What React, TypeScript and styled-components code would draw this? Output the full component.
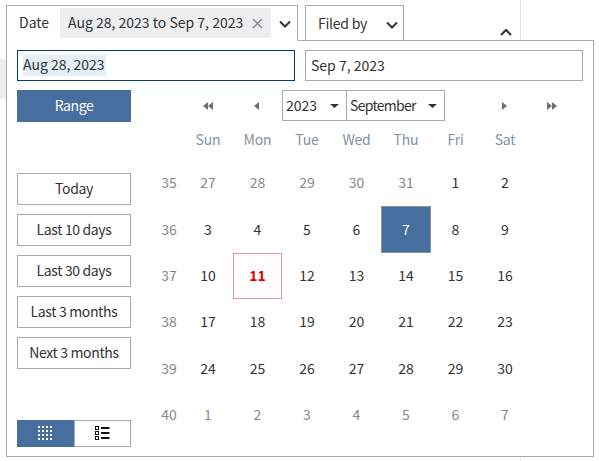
import React from "react";
import styled, { createGlobalStyle } from "styled-components";

const Global = createGlobalStyle`
  html, body { margin: 0; padding: 0; background: #fff; }
  body { font-family: "Noto Sans CJK JP", "Noto Sans", sans-serif; font-size: 14px; color: #333; }
  * { box-sizing: border-box; }
`;

const Page = styled.div`
  position: relative;
  width: 599px;
  height: 461px;
  overflow: hidden;
  padding: 5px 0 0 6px;
`;
const BackBlock = styled.div`
  position: absolute;
  left: 0;
  top: 59px;
  width: 6px;
  height: 40px;
  background: #eceef0;
`;
const BackLine = styled.div`
  position: absolute;
  left: 520px;
  top: 0;
  width: 1px;
  height: 461px;
  background: #e4e4e4;
`;
const Toolbar = styled.div`
  position: relative;
  z-index: 2;
  display: flex;
  height: 36px;
  width: 588px;
`;
const DateGroup = styled.div`
  display: flex;
  align-items: flex-start;
  width: 292px;
  height: 36px;
  border: 1px solid #aaa;
  border-bottom-color: #fff;
  background: #fff;
  padding: 2px 0 0 12px;
`;
const Label = styled.span`
  width: 41px;
  line-height: 28px;
`;
const Chip = styled.div`
  display: flex;
  align-items: center;
  width: 211px;
  height: 30px;
  background: #eceef0;
  padding-left: 8px;
`;
const ChipText = styled.span`
  width: 184px;
  white-space: nowrap;
  padding-bottom: 2px;
`;
const ChevronSlot = styled.span`
  display: flex;
  align-items: center;
  height: 32px;
  width: 20px;
  justify-content: flex-end;
`;
const FiledBy = styled.div`
  display: flex;
  align-items: center;
  width: 99px;
  height: 36px;
  margin-left: 7px;
  border: 1px solid #aaa;
  background: #fff;
  padding: 0 0 0 12px;
`;
const FiledLabel = styled.span`
  display: flex;
  width: 68px;
  letter-spacing: -0.25px;
`;
const FiledChevron = styled.span`
  display: flex;
  margin-top: 3px;
`;
const Collapse = styled.span`
  position: absolute;
  left: 494px;
  top: 23px;
  display: flex;
`;
const Panel = styled.div`
  position: relative;
  z-index: 1;
  width: 588px;
  height: 417px;
  margin-top: -1px;
  background: #fff;
  border: 1px solid #aaa;
  padding: 9px 10px;
  display: flex;
  flex-direction: column;
`;
const InputRow = styled.div`
  display: flex;
  gap: 10px;
  height: 31px;
`;
const DateInput = styled.div<{ $focus?: boolean }>`
  display: flex;
  align-items: center;
  width: 278px;
  height: 31px;
  padding: 0 5px;
  border: 1px solid ${(p) => (p.$focus ? "#003f72" : "#aaa")};
`;
const InputText = styled.span`
  padding-bottom: 2px;
`;
const Selected = styled.span`
  display: inline-block;
  background: #e3eef7;
  line-height: 19px;
  padding: 0 1px 2px 0;
`;
const Body = styled.div`
  display: flex;
  flex: 1;
  margin-top: 9px;
`;
const Side = styled.div`
  display: flex;
  flex-direction: column;
  width: 114px;
`;
const RangeButton = styled.div`
  display: flex;
  align-items: center;
  justify-content: center;
  height: 32px;
  padding-bottom: 2px;
  background: #466fa0;
  color: #fff;
  letter-spacing: -0.4px;
`;
const Presets = styled.div`
  display: flex;
  flex-direction: column;
  gap: 9px;
  margin-top: 51px;
`;
const Preset = styled.div`
  display: flex;
  align-items: center;
  justify-content: center;
  height: 32px;
  padding-bottom: 2px;
  border: 1px solid #aaa;
  letter-spacing: -0.35px;
`;
const Toggle = styled.div`
  display: flex;
  height: 27px;
  margin-top: auto;
`;
const ToggleItem = styled.div<{ $on?: boolean }>`
  display: flex;
  flex: 1;
  align-items: center;
  justify-content: center;
  background: ${(p) => (p.$on ? "#466fa0" : "#fff")};
  border: 1px solid ${(p) => (p.$on ? "#466fa0" : "#aaa")};
  color: ${(p) => (p.$on ? "#fff" : "#111")};
`;
const Main = styled.div`
  display: flex;
  flex-direction: column;
  margin-left: 19px;
`;
const Nav = styled.div`
  position: relative;
  display: flex;
  align-items: center;
  height: 31px;
  padding-left: 132px;
`;
const NavIcon = styled.span<{ $x: number }>`
  position: absolute;
  left: ${(p) => p.$x}px;
  top: 12px;
  display: flex;
  color: #707070;
`;
const Select = styled.div<{ $w: number }>`
  display: flex;
  align-items: center;
  justify-content: space-between;
  width: ${(p) => p.$w}px;
  height: 31px;
  margin-right: -1px;
  padding: 0 7px 0 3px;
  border: 1px solid #aaa;
`;
const SelectText = styled.span<{ $tight?: boolean }>`
  padding-bottom: 2px;
  letter-spacing: ${(p) => (p.$tight ? "-0.7px" : "0")};
`;
const Grid = styled.div`
  display: grid;
  grid-template-columns: 33.25px repeat(7, 49.5px);
  grid-auto-rows: 46.4px;
  margin-top: 9px;
`;
const HeadRow = styled.div`
  display: grid;
  grid-template-columns: 33.25px repeat(7, 49.5px);
  margin-top: 8px;
  height: 22px;
`;
const Head = styled.div`
  display: flex;
  align-items: center;
  justify-content: center;
  height: 22px;
  padding-bottom: 2px;
  color: #8492a0;
  letter-spacing: -0.2px;
`;
const Week = styled.div`
  display: flex;
  align-items: center;
  justify-content: center;
  color: #888;
  padding: 0 0 2px 5px;
`;
const Day = styled.div<{ $kind?: "other" | "selected" | "today" }>`
  display: flex;
  align-items: center;
  justify-content: center;
  padding-bottom: 2px;
  color: ${(p) =>
    p.$kind === "other" ? "#888" : p.$kind === "selected" ? "#fff" : p.$kind === "today" ? "#e00000" : "#333"};
  font-weight: ${(p) => (p.$kind === "today" ? 700 : 400)};
  background: ${(p) => (p.$kind === "selected" ? "#466fa0" : "transparent")};
  border: 1px solid
    ${(p) => (p.$kind === "selected" ? "#8a95a3" : p.$kind === "today" ? "#e39aa0" : "transparent")};
`;

const Chevron = ({ up }: { up?: boolean }) => (
  <svg width="12" height="8" viewBox="0 0 12 8">
    <path d={up ? "M1 7l5-5 5 5" : "M1 1.5l5 5 5-5"} fill="none" stroke="#333" strokeWidth="2" />
  </svg>
);
const Close = () => (
  <svg width="11" height="11" viewBox="0 0 11 11">
    <path d="M1 1l9 9M10 1l-9 9" stroke="#888" strokeWidth="1.4" />
  </svg>
);
const Caret = () => (
  <svg width="9" height="4" viewBox="0 0 9 4">
    <path d="M0 0h9L4.5 4z" fill="#333" />
  </svg>
);
const Tri = ({ dir, double }: { dir: "l" | "r"; double?: boolean }) => (
  <svg width={double ? 10 : 5} height="8" viewBox={double ? "0 0 10 8" : "0 0 5 8"}>
    {dir === "l" ? (
      <>
        <path d="M5 0v8L0 4z" fill="currentColor" />
        {double && <path d="M10 0v8L5 4z" fill="currentColor" />}
      </>
    ) : (
      <>
        <path d="M0 0v8l5-4z" fill="currentColor" />
        {double && <path d="M5 0v8l5-4z" fill="currentColor" />}
      </>
    )}
  </svg>
);
const DotsIcon = () => (
  <svg width="15" height="15" viewBox="0 0 15 15" fill="currentColor">
    {[0, 4, 8, 12].map((y) =>
      [0, 4, 8, 12].map((x) => <rect key={`${x}-${y}`} x={x} y={y} width="2" height="2" />)
    )}
  </svg>
);
const ListIcon = () => (
  <svg width="15" height="15" viewBox="0 0 15 15">
    {[0, 5, 10].map((y) => (
      <g key={y}>
        <rect x="0.5" y={y + 0.5} width="3" height="3" fill="none" stroke="#111" />
        <rect x="6" y={y + 1} width="8.5" height="2" fill="#111" />
      </g>
    ))}
  </svg>
);

type Cell = { d: number; kind?: "other" | "selected" | "today" };
const o = (d: number): Cell => ({ d, kind: "other" });
const n = (d: number): Cell => ({ d });
const weeks: { w: number; days: Cell[] }[] = [
  { w: 35, days: [o(27), o(28), o(29), o(30), o(31), n(1), n(2)] },
  { w: 36, days: [n(3), n(4), n(5), n(6), { d: 7, kind: "selected" }, n(8), n(9)] },
  { w: 37, days: [n(10), { d: 11, kind: "today" }, n(12), n(13), n(14), n(15), n(16)] },
  { w: 38, days: [n(17), n(18), n(19), n(20), n(21), n(22), n(23)] },
  { w: 39, days: [n(24), n(25), n(26), n(27), n(28), n(29), n(30)] },
  { w: 40, days: [o(1), o(2), o(3), o(4), o(5), o(6), o(7)] },
];
const presets = ["Today", "Last 10 days", "Last 30 days", "Last 3 months", "Next 3 months"];
const heads = ["Sun", "Mon", "Tue", "Wed", "Thu", "Fri", "Sat"];

export default function App() {
  return (
    <Page>
      <Global />
      <BackBlock />
      <BackLine />
      <Toolbar>
        <DateGroup>
          <Label>Date</Label>
          <Chip>
            <ChipText>Aug 28, 2023 to Sep 7, 2023</ChipText>
            <Close />
          </Chip>
          <ChevronSlot>
            <Chevron />
          </ChevronSlot>
        </DateGroup>
        <FiledBy>
          <FiledLabel>Filed by</FiledLabel>
          <FiledChevron>
            <Chevron />
          </FiledChevron>
        </FiledBy>
        <Collapse>
          <Chevron up />
        </Collapse>
      </Toolbar>
      <Panel>
        <InputRow>
          <DateInput $focus>
            <Selected>Aug 28, 2023</Selected>
          </DateInput>
          <DateInput>
            <InputText>Sep 7, 2023</InputText>
          </DateInput>
        </InputRow>
        <Body>
          <Side>
            <RangeButton>Range</RangeButton>
            <Presets>
              {presets.map((p) => (
                <Preset key={p}>{p}</Preset>
              ))}
            </Presets>
            <Toggle>
              <ToggleItem $on>
                <DotsIcon />
              </ToggleItem>
              <ToggleItem>
                <ListIcon />
              </ToggleItem>
            </Toggle>
          </Side>
          <Main>
            <Nav>
              <NavIcon $x={53}>
                <Tri dir="l" double />
              </NavIcon>
              <NavIcon $x={104}>
                <Tri dir="l" />
              </NavIcon>
              <Select $w={65}>
                <SelectText>2023</SelectText>
                <Caret />
              </Select>
              <Select $w={99}>
                <SelectText $tight>September</SelectText>
                <Caret />
              </Select>
              <NavIcon $x={352}>
                <Tri dir="r" />
              </NavIcon>
              <NavIcon $x={397}>
                <Tri dir="r" double />
              </NavIcon>
            </Nav>
            <HeadRow>
              <span />
              {heads.map((h) => (
                <Head key={h}>{h}</Head>
              ))}
            </HeadRow>
            <Grid>
              {weeks.map((row) => (
                <React.Fragment key={row.w}>
                  <Week>{row.w}</Week>
                  {row.days.map((c, i) => (
                    <Day key={i} $kind={c.kind}>
                      {c.d}
                    </Day>
                  ))}
                </React.Fragment>
              ))}
            </Grid>
          </Main>
        </Body>
      </Panel>
    </Page>
  );
}
